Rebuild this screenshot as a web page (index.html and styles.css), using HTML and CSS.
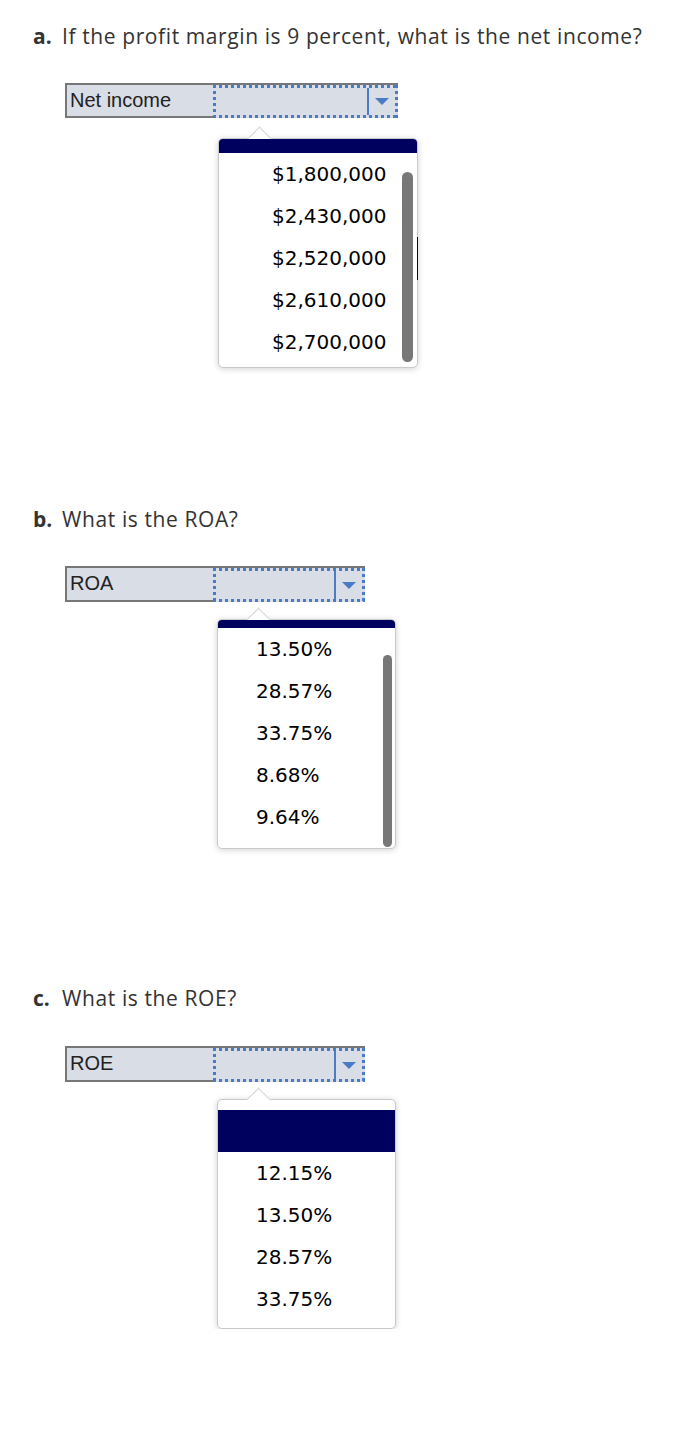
FILE: index.html
```html
<!DOCTYPE html>
<html>
<head>
	<meta charset="UTF-8">
	<title>Profitability questions</title>
	<link rel="stylesheet" href="styles.css">
</head>
<body>
	<div class="page">
		<div class="question q-a">
			<p class="prompt"><b>a.</b>If the profit margin is 9 percent, what is the net income?</p>
			<div class="select select-wide">
				<span class="select-label">Net income</span>
				<span class="select-choice"><span class="select-btn"><span class="arrow"></span></span></span>
			</div>
			<div class="popup popup-wide">
				<div class="popup-body">
					<ul class="options scroll-a">
						<li class="blank"></li>
						<li>$1,800,000</li>
						<li>$2,430,000</li>
						<li>$2,520,000</li>
						<li>$2,610,000</li>
						<li>$2,700,000</li>
					</ul>
				</div>
				<span class="thumb"></span>
				<span class="edge-mark"></span>
			</div>
		</div>

		<div class="question q-b">
			<p class="prompt"><b>b.</b>What is the ROA?</p>
			<div class="select">
				<span class="select-label">ROA</span>
				<span class="select-choice"><span class="select-btn"><span class="arrow"></span></span></span>
			</div>
			<div class="popup">
				<div class="popup-body">
					<ul class="options scroll-b">
						<li class="blank"></li>
						<li>13.50%</li>
						<li>28.57%</li>
						<li>33.75%</li>
						<li>8.68%</li>
						<li>9.64%</li>
					</ul>
				</div>
				<span class="thumb"></span>
			</div>
		</div>

		<div class="question q-c">
			<p class="prompt"><b>c.</b>What is the ROE?</p>
			<div class="select">
				<span class="select-label">ROE</span>
				<span class="select-choice"><span class="select-btn"><span class="arrow"></span></span></span>
			</div>
			<div class="popup">
				<div class="popup-body">
					<ul class="options">
						<li class="blank"></li>
						<li>12.15%</li>
						<li>13.50%</li>
						<li>28.57%</li>
						<li>33.75%</li>
					</ul>
				</div>
			</div>
		</div>
	</div>
</body>
</html>
```

FILE: styles.css
```css
	body{
		margin:0;
		background:#fff;
	}
	.page{
		padding:0 33px;
	}
	.question{
		padding-top:137px;
	}
	.question.q-a{
		padding-top:22px;
	}
	.question.q-c{
		padding-top:135px;
	}
	.prompt{
		margin:0;
		font-family:"Open Sans",Lato,sans-serif;
		font-size:21px;
		line-height:28px;
		letter-spacing:0.6px;
		color:#333;
	}
	.prompt b{
		display:inline-block;
		width:29px;
		font-weight:bold;
		letter-spacing:0;
	}

	/* closed select */
	.select{
		display:flex;
		box-sizing:border-box;
		width:300px;
		height:36px;
		margin:33px 0 0 32px;
		border:2px solid #777;
		background:#d9dde6;
	}
	.q-c .select{
		margin-top:34px;
	}
	.select-wide{
		width:333px;
		height:35px;
	}
	.select-label{
		width:143px;
		padding-left:3px;
		font-family:"Liberation Sans",Arial,sans-serif;
		font-size:20px;
		line-height:31px;
		color:#222;
	}
	.select-choice{
		flex:1;
		display:flex;
		justify-content:flex-end;
		margin:0 -2px -2px 0;
		padding:3px;
		background:
			repeating-linear-gradient(to right,#4a7bc4 0 3px,transparent 3px 6px) top left/100% 3px no-repeat,
			repeating-linear-gradient(to right,#4a7bc4 0 3px,transparent 3px 6px) bottom left/100% 3px no-repeat,
			repeating-linear-gradient(to bottom,#4a7bc4 0 3px,transparent 3px 6px) top left/3px 100% no-repeat,
			repeating-linear-gradient(to bottom,#4a7bc4 0 3px,transparent 3px 6px) top right/3px 100% no-repeat,
			#d9dde6;
	}
	.select-btn{
		display:flex;
		align-items:center;
		justify-content:center;
		width:26px;
		border-left:2px solid #4a7bc4;
	}
	.arrow{
		width:0;
		height:0;
		border-left:7px solid transparent;
		border-right:7px solid transparent;
		border-top:7px solid #4a7bc4;
	}

	/* open list */
	.popup{
		position:relative;
		box-sizing:border-box;
		width:179px;
		height:230px;
		margin:17px 0 0 184px;
		border:1px solid #c9c9c9;
		border-radius:5px;
		background:#fff;
		box-shadow:0 1px 6px rgba(0,0,0,0.18);
	}
	.popup-wide{
		width:200px;
		margin:20px 0 0 185px;
	}
	.popup:before{
		position:absolute;
		top:-9px;
		left:32px;
		content:'';
		width:16px;
		height:16px;
		background:#fff;
		border-left:1px solid #d4d4d4;
		border-top:1px solid #d4d4d4;
		transform:rotate(45deg);
	}
	.popup-body{
		position:relative;
		height:100%;
		overflow:hidden;
		border-radius:4px;
	}
	.options{
		margin:0;
		padding:10px 0 8px;
		list-style:none;
		font-family:"DejaVu Sans",Verdana,sans-serif;
		font-size:20px;
		color:#000;
	}
	.options li{
		height:42px;
		line-height:42px;
		padding-left:38px;
	}
	.popup-wide .options li{
		padding-left:53px;
	}
	.options li.blank{
		background:#00005f;
	}
	.scroll-a{
		margin-top:-38px;
	}
	.scroll-b{
		margin-top:-44px;
	}
	.thumb{
		position:absolute;
		top:35px;
		left:165px;
		width:9px;
		height:192px;
		border-radius:5px;
		background:#777;
	}
	.popup-wide .thumb{
		top:33px;
		left:183px;
		width:11px;
		height:190px;
		border-radius:6px;
	}
	.edge-mark{
		position:absolute;
		top:98px;
		right:-1px;
		width:1px;
		height:43px;
		background:#00005f;
	}
```
